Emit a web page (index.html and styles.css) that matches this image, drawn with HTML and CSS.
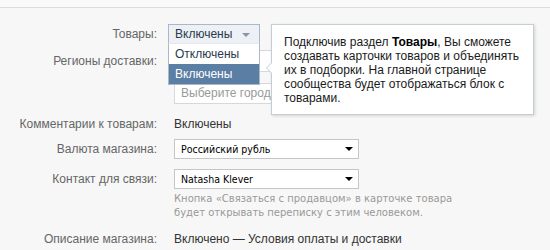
FILE: index.html
```html
<!DOCTYPE html>
<html lang="ru">
<head>
  <meta charset="UTF-8" />
  <title>Настройки товаров</title>
  <link rel="stylesheet" href="styles.css">
</head>
<body>
  <div class="topbar"></div>

  <div class="form">
    <div class="row row-goods">
      <div class="label">Товары:</div>
      <div class="value">
        <div class="dd">
          <div class="dd-head">Включены <span class="dd-arrow"></span></div>
          <ul class="dd-list">
            <li>Отключены</li>
            <li class="active">Включены</li>
          </ul>
        </div>
      </div>
    </div>

    <div class="row row-regions">
      <div class="label">Регионы доставки:</div>
      <div class="value">
        <div class="input"></div>
        <div class="input placeholder">Выберите город</div>
      </div>
    </div>

    <div class="row row-comments">
      <div class="label">Комментарии к товарам:</div>
      <div class="value text">Включены</div>
    </div>

    <div class="row row-currency">
      <div class="label">Валюта магазина:</div>
      <div class="value">
        <div class="select">Российский рубль <span class="sel-arrow"></span></div>
      </div>
    </div>

    <div class="row row-contact">
      <div class="label">Контакт для связи:</div>
      <div class="value">
        <div class="select">Natasha Klever <span class="sel-arrow"></span></div>
        <div class="hint">Кнопка «Связаться с продавцом» в карточке товара<br>будет открывать переписку с этим человеком.</div>
      </div>
    </div>

    <div class="row row-desc">
      <div class="label">Описание магазина:</div>
      <div class="value text">Включено — Условия оплаты и доставки</div>
    </div>

    <div class="tip">
      Подключив раздел <b>Товары</b>, Вы сможете создавать карточки товаров и объединять их в подборки. На главной странице сообщества будет отображаться блок с товарами.
    </div>
  </div>
</body>
</html>
```

FILE: styles.css
```css
html, body {
  margin: 0;
  padding: 0;
}
body {
  background: #f7f7f7;
  font-family: "Liberation Sans", Arial, sans-serif;
  font-size: 12px;
  color: #333;
  width: 550px;
  height: 250px;
  overflow: hidden;
}
.topbar {
  height: 7px;
  background: #f9f9f9;
  border-bottom: 1px solid #dcdcdc;
}
.form {
  position: relative;
  padding-top: 16px;
}
.row {
  display: grid;
  grid-template-columns: 157px 1fr;
  column-gap: 17px;
}
.label {
  text-align: right;
  color: #666;
  line-height: 20px;
}
.value.text {
  line-height: 20px;
  color: #333;
}

/* open dropdown */
.dd {
  position: relative;
  width: 92px;
  margin-left: -6px;
}
.dd-head {
  height: 19px;
  line-height: 19px;
  padding-left: 6px;
  background: #edf0f4;
  border: 1px solid #a9b8c9;
  border-bottom: none;
  color: #2b3a4d;
  position: relative;
  z-index: 2;
}
.dd-arrow {
  position: absolute;
  right: 9px;
  top: 8px;
  border-left: 4px solid transparent;
  border-right: 4px solid transparent;
  border-top: 4px solid #8796a8;
}
.dd-list {
  position: absolute;
  left: 0;
  top: 19px;
  width: 90px;
  margin: 0;
  padding: 0;
  list-style: none;
  background: #fff;
  border: 1px solid #a9b8c9;
  border-top: 1px solid #e3e8ee;
  z-index: 2;
}
.dd-list li {
  height: 20px;
  line-height: 20px;
  padding-left: 6px;
  color: #2b3a4d;
}
.dd-list li.active {
  background: #5b7ea5;
  color: #fff;
}

/* regions */
.row-regions { margin-top: 6px; }
.row-regions .label { line-height: 22px; }
.input {
  height: 20px;
  width: 120px;
  background: #fff;
  border: 1px solid #d3d9de;
  margin-left: -6px;
}
.input + .input {
  margin-top: 11px;
  margin-left: 0;
  height: 19px;
}
.placeholder {
  color: #9a9a9a;
  line-height: 19px;
  padding-left: 6px;
}

.row-comments { margin-top: 10px; }

.select {
  position: relative;
  box-sizing: border-box;
  width: 185px;
  height: 20px;
  line-height: 18px;
  background: #fff;
  border: 1px solid #c6c6c6;
  padding-left: 6px;
  font-family: "DejaVu Sans Condensed", "DejaVu Sans", Tahoma, sans-serif;
  font-size: 10.5px;
  color: #000;
}
.sel-arrow {
  position: absolute;
  right: 5px;
  top: 7px;
  border-left: 4px solid transparent;
  border-right: 4px solid transparent;
  border-top: 4px solid #000;
}
.row-currency { margin-top: 5px; }
.row-contact { margin-top: 10px; }
.hint {
  margin-top: 3px;
  font-family: "DejaVu Sans", Tahoma, sans-serif;
  font-size: 10px;
  line-height: 14px;
  color: #999;
}
.row-desc { margin-top: 9px; }

/* tooltip */
.tip {
  position: absolute;
  left: 271px;
  top: 16px;
  box-sizing: border-box;
  width: 263px;
  height: 91px;
  padding: 10px 12px 0 12px;
  background: #fff;
  border: 1px solid #c5cdd7;
  box-shadow: 1px 1px 3px rgba(0, 0, 0, 0.15);
  color: #1a1a1a;
  line-height: 14px;
  z-index: 3;
}
.tip b { color: #000; }
.tip::before {
  content: "";
  position: absolute;
  left: -6px;
  top: 37px;
  border-top: 6px solid transparent;
  border-bottom: 6px solid transparent;
  border-right: 6px solid #c5cdd7;
}
.tip::after {
  content: "";
  position: absolute;
  left: -5px;
  top: 37px;
  border-top: 6px solid transparent;
  border-bottom: 6px solid transparent;
  border-right: 6px solid #fff;
}
```
